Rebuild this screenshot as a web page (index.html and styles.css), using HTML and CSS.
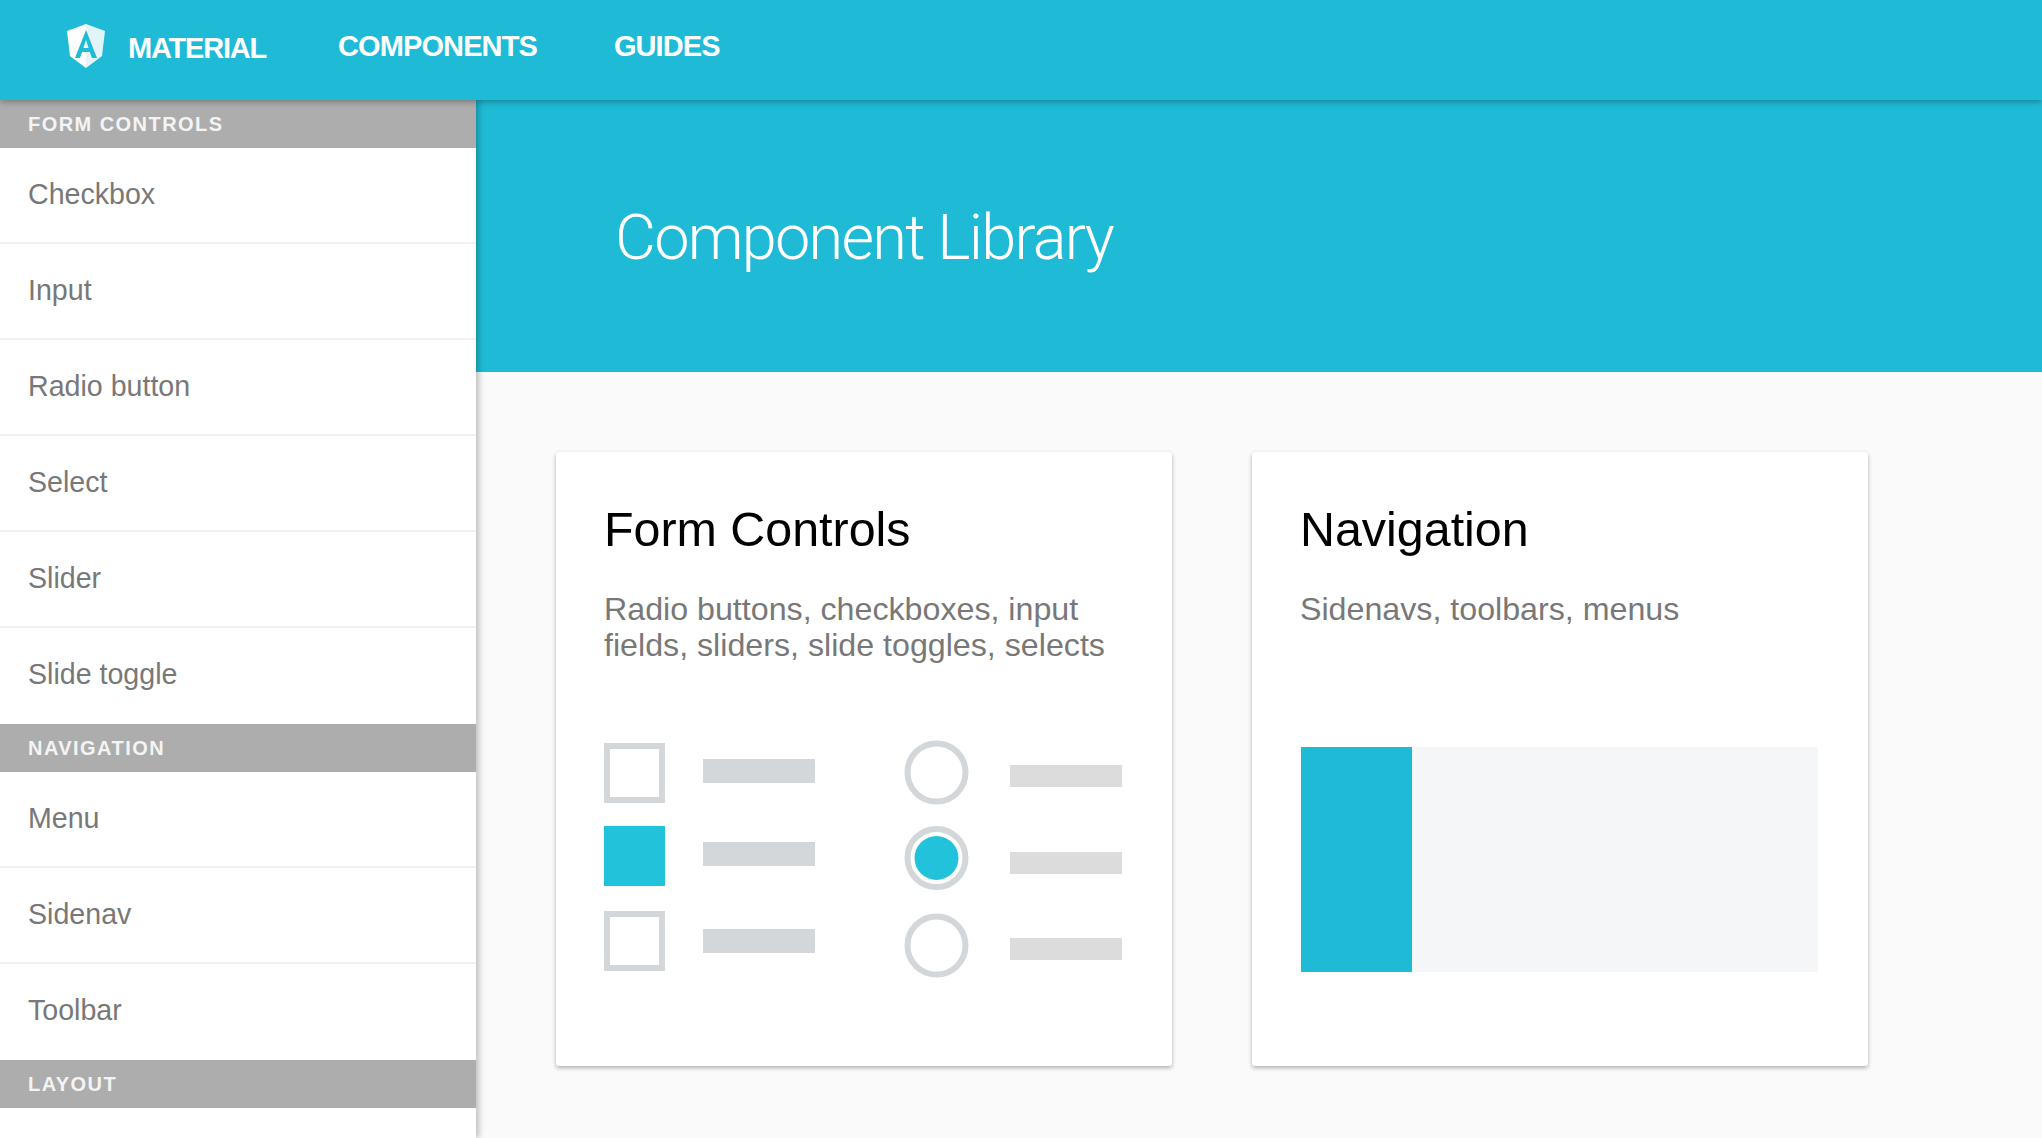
FILE: index.html
```html
<!DOCTYPE html>
<html lang="en">
<head>
    <meta charset="UTF-8">
    <meta name="viewport" content="width=device-width, initial-scale=1.0">
    <title>Component Library</title>
    <link rel="stylesheet" href="styles.css">
</head>
<body>
    <header class="toolbar">
        <a class="brand" href="#">
            <svg class="logo" viewBox="0 0 40 44" width="40" height="44">
                <path d="M20 0 L1 7 L4 32 L20 44 Z" fill="#fff"/>
                <path d="M20 0 L39 7 L36 32 L20 44 Z" fill="#e3f4f8"/>
                <path d="M20 6 L9 34 H14 L16.2 28 H23.8 L26 34 H31 Z M20 16 L22.6 24 H17.4 Z" fill="#1fbbd6" fill-rule="evenodd"/>
            </svg>
            <span class="brand-name">MATERIAL</span>
        </a>
        <a class="tool-link" href="#">COMPONENTS</a>
        <a class="tool-link" href="#">GUIDES</a>
    </header>
    <div class="page">
        <nav class="sidebar">
            <h3 class="nav-head">FORM CONTROLS</h3>
            <a class="nav-item" href="#">Checkbox</a>
            <a class="nav-item" href="#">Input</a>
            <a class="nav-item" href="#">Radio button</a>
            <a class="nav-item" href="#">Select</a>
            <a class="nav-item" href="#">Slider</a>
            <a class="nav-item" href="#">Slide toggle</a>
            <h3 class="nav-head">NAVIGATION</h3>
            <a class="nav-item" href="#">Menu</a>
            <a class="nav-item" href="#">Sidenav</a>
            <a class="nav-item" href="#">Toolbar</a>
            <h3 class="nav-head">LAYOUT</h3>
        </nav>
        <main class="content">
            <div class="hero">
                <h1>Component Library</h1>
            </div>
            <div class="cards">
                <section class="card">
                    <h2>Form Controls</h2>
                    <p>Radio buttons, checkboxes, input fields, sliders, slide toggles, selects</p>
                    <svg class="preview" viewBox="0 0 520 240" width="520" height="240">
                        <g fill="#fff" stroke="#d4d7d9" stroke-width="6">
                            <rect x="3" y="6" width="55" height="54"/>
                            <rect x="3" y="174" width="55" height="54"/>
                            <circle cx="332.5" cy="32.5" r="29"/>
                            <circle cx="332.5" cy="118" r="29"/>
                            <circle cx="332.5" cy="205.5" r="29"/>
                        </g>
                        <rect x="0" y="86" width="61" height="60" fill="#22c3da"/>
                        <circle cx="332.5" cy="118" r="22" fill="#22c3da"/>
                        <g fill="#d4d7d9">
                            <rect x="99" y="19" width="112" height="24"/>
                            <rect x="99" y="102" width="112" height="24"/>
                            <rect x="99" y="189" width="112" height="24"/>
                        </g>
                        <g fill="#dcdcdc">
                            <rect x="406" y="25" width="112" height="22"/>
                            <rect x="406" y="112" width="112" height="22"/>
                            <rect x="406" y="198" width="112" height="22"/>
                        </g>
                    </svg>
                </section>
                <section class="card">
                    <h2>Navigation</h2>
                    <p>Sidenavs, toolbars, menus</p>
                    <div class="nav-preview">
                        <div class="nav-preview-side"></div>
                    </div>
                </section>
            </div>
        </main>
    </div>
</body>
</html>
```
FILE: styles.css
```css
html, body {
    height: 100%;
}

body {
    font-family: "Liberation Sans", Arial, sans-serif;
    background-color: #fafafa;
    margin: 0;
    padding: 0;
    overflow: hidden;
}

a {
    text-decoration: none;
}

.toolbar {
    position: relative;
    z-index: 3;
    display: flex;
    align-items: center;
    box-sizing: border-box;
    height: 100px;
    padding: 0 0 8px 66px;
    background-color: #1fbbd6;
    box-shadow: 0 2px 6px rgba(0, 0, 0, 0.3);
}

.brand {
    display: flex;
    align-items: center;
    margin-right: 72px;
}

.logo {
    margin-right: 22px;
}

.brand-name {
    color: #fff;
    font-size: 29px;
    font-weight: bold;
    letter-spacing: -1.2px;
    margin-top: 4px;
}

.tool-link {
    color: #fff;
    font-size: 29px;
    font-weight: bold;
    letter-spacing: -0.9px;
    margin-right: 77px;
}

.page {
    display: flex;
    height: 1038px;
}

.sidebar {
    position: relative;
    z-index: 2;
    flex: 0 0 476px;
    background-color: #fff;
    box-shadow: 3px 0 6px rgba(0, 0, 0, 0.24);
}

.nav-head {
    box-sizing: border-box;
    height: 48px;
    margin: 0;
    padding-left: 28px;
    background-color: #adadad;
    color: #f4f4f4;
    font-size: 20px;
    font-weight: bold;
    line-height: 49px;
    letter-spacing: 1.45px;
}

.nav-item {
    display: block;
    box-sizing: border-box;
    height: 96px;
    padding-left: 28px;
    border-bottom: 2px solid #f1f1f1;
    color: #787878;
    font-size: 28.6px;
    line-height: 93px;
}

.nav-item:has(+ .nav-head) {
    border-bottom: none;
}

.content {
    flex: 1;
}

.hero {
    box-sizing: border-box;
    height: 272px;
    padding: 103px 0 0 139px;
    background-color: #1fbbd6;
}

.hero h1 {
    margin: 0;
    color: #fff;
    font-family: Roboto, "Liberation Sans", sans-serif;
    font-size: 63px;
    font-weight: 300;
    line-height: 70px;
    letter-spacing: -1.75px;
}

.cards {
    display: flex;
    gap: 80px;
    padding: 80px 0 0 80px;
}

.card {
    box-sizing: border-box;
    width: 616px;
    height: 614px;
    padding: 49px 48px 0;
    background-color: #fff;
    border-radius: 3px;
    box-shadow: 0 2px 4px rgba(0, 0, 0, 0.3);
}

.card h2 {
    margin: 0;
    color: #000;
    font-size: 48.4px;
    font-weight: normal;
    line-height: 56px;
}

.card p {
    height: 74px;
    margin: 34px 0 0;
    color: #787878;
    font-size: 32.2px;
    line-height: 36px;
}

.preview {
    display: block;
    margin-top: 75px;
}

.nav-preview {
    width: 517px;
    height: 225px;
    margin: 82px 0 0 1px;
    background-color: #f4f6f8;
}

.nav-preview-side {
    width: 111px;
    height: 100%;
    background-color: #1fbbd6;
}
```
